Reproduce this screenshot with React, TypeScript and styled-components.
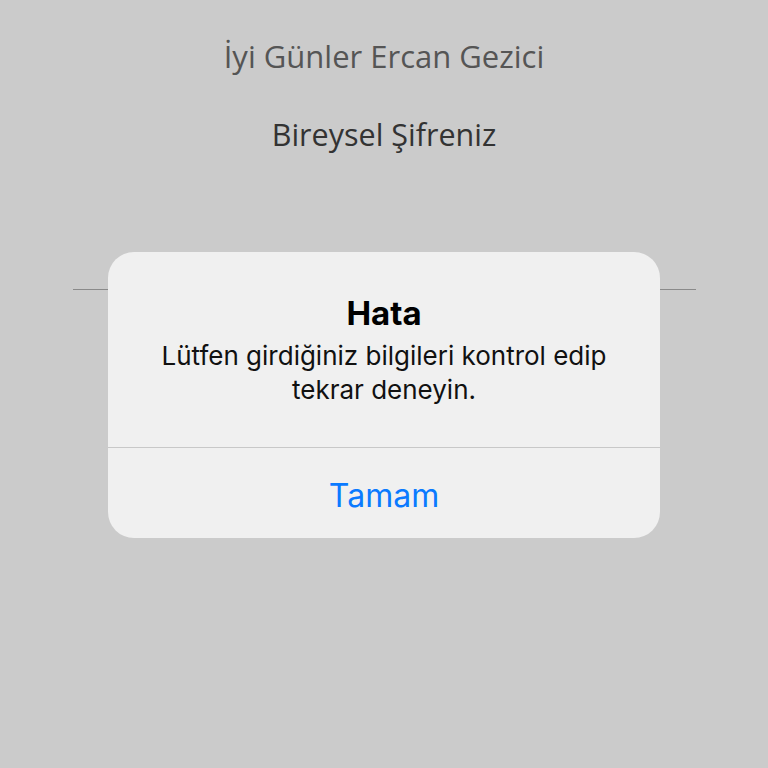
import styled, { createGlobalStyle } from "styled-components";

const GlobalStyle = createGlobalStyle`
  html, body {
    margin: 0;
    padding: 0;
    background: #cbcbcb;
  }
  #root {
    min-height: 768px;
  }
`;

const Screen = styled.div`
  position: relative;
  width: 768px;
  height: 768px;
  background: #cbcbcb;
  display: flex;
  flex-direction: column;
  align-items: center;
  font-family: "Open Sans", "Noto Sans", sans-serif;
  overflow: hidden;
`;

const Greeting = styled.h1`
  margin: 34px 0 0;
  font-size: 31px;
  font-weight: 400;
  color: #555555;
  line-height: 44px;
`;

const Label = styled.h2`
  margin: 34px 0 0;
  font-size: 30.5px;
  font-weight: 400;
  color: #333333;
  line-height: 44px;
`;

const PasswordField = styled.div`
  margin-top: 133px;
  width: 623px;
  height: 1px;
  background: #8a8a8a;
`;

const Dialog = styled.div`
  position: absolute;
  left: 108px;
  top: 252px;
  width: 552px;
  height: 286px;
  border-radius: 26px;
  background: #f0f0f0;
  display: flex;
  flex-direction: column;
  font-family: Inter, Roboto, "Liberation Sans", sans-serif;
`;

const DialogBody = styled.div`
  height: 196px;
  display: flex;
  flex-direction: column;
  align-items: center;
  padding-top: 42px;
  box-sizing: border-box;
  border-bottom: 1px solid #c8c8c8;
`;

const DialogTitle = styled.div`
  font-size: 33px;
  font-weight: 700;
  color: #000;
  line-height: 38px;
`;

const DialogMessage = styled.div`
  margin-top: 7px;
  font-size: 26px;
  color: #111;
  line-height: 34px;
  text-align: center;
  white-space: nowrap;
`;

const DialogButton = styled.button`
  flex: 1;
  border: none;
  background: transparent;
  font-family: inherit;
  font-size: 32px;
  color: #0a7aff;
  cursor: pointer;
  padding: 4px 0 0;
`;

export default function App() {
  return (
    <Screen>
      <GlobalStyle />
      <Greeting>İyi Günler Ercan Gezici</Greeting>
      <Label>Bireysel Şifreniz</Label>
      <PasswordField />
      <Dialog>
        <DialogBody>
          <DialogTitle>Hata</DialogTitle>
          <DialogMessage>
            Lütfen girdiğiniz bilgileri kontrol edip
            <br />
            tekrar deneyin.
          </DialogMessage>
        </DialogBody>
        <DialogButton>Tamam</DialogButton>
      </Dialog>
    </Screen>
  );
}
